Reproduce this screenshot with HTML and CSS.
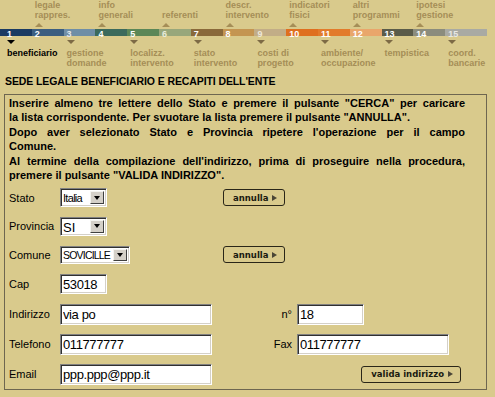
FILE: index.html
```html
<!DOCTYPE html>
<html lang="it">
<head>
<meta charset="UTF-8">
<title>Sede legale beneficiario</title>
<link rel="stylesheet" href="styles.css">
</head>
<body>

<!-- Barra dei passi della procedura -->
<div class="steps">
<div class="steps-top">
<div class="step"></div>
<div class="step"><span class="lbl">legale<br>rappres.</span><span class="tri-up"></span></div>
<div class="step"></div>
<div class="step"><span class="lbl">info<br>generali</span><span class="tri-up"></span></div>
<div class="step"></div>
<div class="step"><span class="lbl">referenti</span><span class="tri-up"></span></div>
<div class="step"></div>
<div class="step"><span class="lbl">descr.<br>intervento</span><span class="tri-up"></span></div>
<div class="step"></div>
<div class="step"><span class="lbl">indicatori<br>fisici</span><span class="tri-up"></span></div>
<div class="step"></div>
<div class="step"><span class="lbl">altri<br>programmi</span><span class="tri-up"></span></div>
<div class="step"></div>
<div class="step"><span class="lbl">ipotesi<br>gestione</span><span class="tri-up"></span></div>
<div class="step"></div>
</div>

<div class="bar">
<span class="seg s1">1</span>
<span class="seg s2">2</span>
<span class="seg s3">3</span>
<span class="seg s4">4</span>
<span class="seg s5">5</span>
<span class="seg s6">6</span>
<span class="seg s7">7</span>
<span class="seg s8">8</span>
<span class="seg s9">9</span>
<span class="seg s10">10</span>
<span class="seg s11">11</span>
<span class="seg s12">12</span>
<span class="seg s13">13</span>
<span class="seg s14">14</span>
<span class="seg s15">15</span>
</div>

<div class="steps-bottom">
<div class="step current"><span class="tri-down"></span><span class="lbl">beneficiario</span></div>
<div class="step"></div>
<div class="step"><span class="tri-down"></span><span class="lbl">gestione<br>domande</span></div>
<div class="step"></div>
<div class="step"><span class="tri-down"></span><span class="lbl">localizz.<br>intervento</span></div>
<div class="step"></div>
<div class="step"><span class="tri-down"></span><span class="lbl">stato<br>intervento</span></div>
<div class="step"></div>
<div class="step"><span class="tri-down"></span><span class="lbl">costi di<br>progetto</span></div>
<div class="step"></div>
<div class="step"><span class="tri-down"></span><span class="lbl">ambiente/<br>occupazione</span></div>
<div class="step"></div>
<div class="step"><span class="tri-down"></span><span class="lbl">tempistica</span></div>
<div class="step"></div>
<div class="step"><span class="tri-down"></span><span class="lbl">coord.<br>bancarie</span></div>
</div>
</div>

<h1 class="title">SEDE LEGALE BENEFICIARIO E RECAPITI DELL'ENTE</h1>

<div class="box">
<!-- Istruzioni: le righe lunghe sono giustificate -->
<div class="info">
<p><span class="full">Inserire almeno tre lettere dello Stato e premere il pulsante "CERCA" per caricare</span>
la lista corrispondente. Per svuotare la lista premere il pulsante "ANNULLA".</p>
<p><span class="full">Dopo aver selezionato Stato e Provincia ripetere l'operazione per il campo</span>
Comune.</p>
<p><span class="full">Al termine della compilazione dell'indirizzo, prima di proseguire nella procedura,</span>
premere il pulsante "VALIDA INDIRIZZO".</p>
</div>

<form class="form">
<label class="flabel">Stato</label>
<span class="select w-short"><select><option>Italia</option></select><span class="arrow"></span></span>
<button type="button" class="btn">annulla <span class="play"></span></button>
<span></span>

<label class="flabel">Provincia</label>
<span class="select w-short"><select class="big"><option>SI</option></select><span class="arrow"></span></span>
<span></span>
<span></span>

<label class="flabel">Comune</label>
<span class="select w-long"><select><option>SOVICILLE</option></select><span class="arrow"></span></span>
<button type="button" class="btn">annulla <span class="play"></span></button>
<span></span>

<label class="flabel">Cap</label>
<input type="text" class="inp inp-cap" value="53018">
<span></span>
<span></span>

<label class="flabel">Indirizzo</label>
<input type="text" class="inp inp-wide" value="via po">
<label class="flabel right">n°</label>
<input type="text" class="inp inp-num" value="18">

<label class="flabel">Telefono</label>
<input type="text" class="inp inp-wide" value="011777777">
<label class="flabel right">Fax</label>
<input type="text" class="inp inp-wide" value="011777777">

<label class="flabel">Email</label>
<input type="text" class="inp inp-wide" value="ppp.ppp@ppp.it">
<span></span>
<button type="button" class="btn btn-valida">valida indirizzo <span class="play"></span></button>
</form>
</div>

</body>
</html>
```

FILE: styles.css
```css
/* General styling */
body {
    margin: 0;
    background: #d9ca8c;
    font-family: "Liberation Sans", Arial, sans-serif;
    color: #000;
}

/* Step bar */
.steps {
    font-size: 9px;
    line-height: 10px;
    font-weight: bold;
    color: #a58e57;
}

.steps-top, .steps-bottom {
    display: flex;
}

.steps-top {
    height: 29px;
}

.step {
    flex: none;
    width: 31.8px;
    box-sizing: border-box;
    padding-left: 3px;
    display: flex;
    flex-direction: column;
    align-items: flex-start;
    white-space: nowrap;
}

.steps-top .step {
    justify-content: flex-end;
    padding-bottom: 2px;
}

.steps-bottom {
    margin-top: 4px;
}

.step.current {
    padding-left: 7px;
    color: #000;
}

.tri-up {
    width: 0;
    height: 0;
    margin-top: 3px;
    border-left: 4px solid transparent;
    border-right: 4px solid transparent;
    border-bottom: 4px solid #a58e57;
}

.tri-down {
    width: 0;
    height: 0;
    margin-bottom: 4px;
    border-left: 4px solid transparent;
    border-right: 4px solid transparent;
    border-top: 4px solid #7d6a45;
}

.current .tri-down {
    border-top-color: #000;
}

.bar {
    display: flex;
    width: 487px;
    height: 7px;
}

.seg {
    flex: none;
    width: 31.8px;
    box-sizing: border-box;
    padding-left: 3px;
    font-size: 9px;
    line-height: 10px;
    font-weight: bold;
    color: #fff;
}

.s1 { background: #1b3b62; padding-left: 7px; }
.s2 { background: #3b5e80; }
.s3 { background: #6f8ea6; color: #e4e8ea; }
.s4 { background: #3b6a5c; }
.s5 { background: #5b8757; }
.s6 { background: #98a77b; color: #e9ecdc; }
.s7 { background: #8a693a; }
.s8 { background: #c49551; }
.s9 { background: #c2ad87; color: #eee8d8; }
.s10 { background: #df6f1f; }
.s11 { background: #e27b2b; }
.s12 { background: #e9a66b; }
.s13 { background: #5a5b49; }
.s14 { background: #8b8c7d; }
.s15 { background: #a9aaa3; color: #e8e8e4; flex: 1; }

/* Section title */
.title {
    margin: 7px 0 6px 5px;
    font-size: 10.5px;
    line-height: 13px;
    letter-spacing: -0.1px;
}

/* Box with instructions and address form */
.box {
    width: 483px;
    box-sizing: border-box;
    margin-left: 4px;
    padding: 0 0 0 4px;
    border: 1px solid #6e6650;
}

.info {
    width: 456px;
    padding-top: 1px;
    font-size: 11px;
    line-height: 14.4px;
    font-weight: bold;
}

.info p {
    margin: 0;
}

.info .full {
    display: block;
    text-align: justify;
    text-align-last: justify;
}

.form {
    display: grid;
    grid-template-columns: 51px 163px 74px 164px;
    grid-template-rows: 29px 28px 29px 30px 30px 30px 30px;
    align-items: center;
    justify-items: start;
    margin-top: 0.6px;
    font-size: 11px;
}

.flabel.right {
    justify-self: end;
    padding-right: 5px;
}

/* Windows style fields */
.inp, .select {
    box-sizing: border-box;
    border: 1px solid;
    border-color: #808080 #fff #fff #808080;
    box-shadow: inset 1px 1px #303030, inset -1px -1px #d4d0c8;
    background: #fff;
}

.inp {
    height: 21px;
    padding: 0 2px;
    font-family: "Liberation Sans", Arial, sans-serif;
    font-size: 13px;
    letter-spacing: -0.4px;
    color: #000;
}

.inp-cap { width: 47px; height: 20px; }
.inp-wide { width: 152px; }
.inp-num { width: 67px; }

.select {
    display: inline-flex;
    height: 19px;
    padding: 2px;
}

.w-short { width: 47px; }
.w-long { width: 70px; height: 18px; }

.select select {
    appearance: none;
    flex: 1;
    min-width: 0;
    border: none;
    padding: 0;
    background: #fff;
    font-family: "Liberation Sans", Arial, sans-serif;
    font-size: 11px;
    letter-spacing: -0.7px;
    color: #000;
}

.w-long select {
    font-size: 10.5px;
    letter-spacing: -0.8px;
}

.select select.big {
    font-size: 13px;
    letter-spacing: 0;
}

.arrow {
    flex: none;
    width: 14px;
    box-sizing: border-box;
    display: flex;
    align-items: center;
    justify-content: center;
    background: #d4d0c8;
    border: 1px solid;
    border-color: #f4f4f0 #404040 #404040 #f4f4f0;
}

.arrow::after {
    content: "";
    border-left: 3.5px solid transparent;
    border-right: 3.5px solid transparent;
    border-top: 4px solid #000;
}

/* Button styling */
.btn {
    display: inline-flex;
    align-items: center;
    height: 17px;
    padding: 0 7px 0 9px;
    border: 1px solid #2a2618;
    border-radius: 3px;
    background: #d9ca8c;
    font-family: "DejaVu Sans", Verdana, sans-serif;
    font-size: 8.5px;
    font-weight: bold;
    color: #1a1a10;
    cursor: pointer;
}

.btn .play {
    width: 0;
    height: 0;
    margin-left: 4px;
    border-top: 3px solid transparent;
    border-bottom: 3px solid transparent;
    border-left: 5px solid #4a4536;
}

.btn-valida {
    justify-self: end;
}
```
